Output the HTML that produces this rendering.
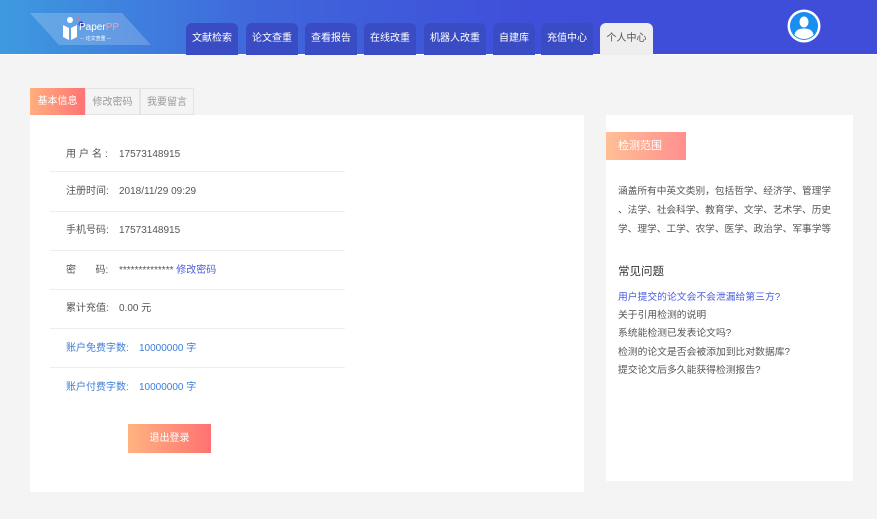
<!DOCTYPE html>
<html><head><meta charset="utf-8">
<style>
*{margin:0;padding:0;box-sizing:border-box}
body{width:877px;height:519px;background:#f4f4f4;font-family:"Liberation Sans","Noto Sans CJK SC",sans-serif;position:relative;overflow:hidden;color:#555}
.hdr{position:absolute;left:0;top:0;width:877px;height:55px;background:linear-gradient(90deg,#3e9ae0 0%,#3f66db 30%,#3f4fd9 60%,#3f4dd8 100%);border-bottom:1px solid #fff}
.logo{position:absolute;left:30px;top:13px}
.nav{position:absolute;top:23px;height:32px;border-radius:6px 6px 0 0;background:#3a4cc4;color:#fff;font-size:10px;line-height:32px;text-align:center}
.nav.on{background:#eeeeee;color:#555}
.av{position:absolute;left:787px;top:9px}
.tab{position:absolute;top:88px;height:27px;line-height:27px;font-size:10px;text-align:center;border:1px solid #e4e4e4;background:#f4f4f4;color:#999}
.tab.on{background:linear-gradient(90deg,#ffae7e,#ff7474);color:#fff;border:none}
.lp{position:absolute;left:30px;top:115px;width:554px;height:377px;background:#fff}
.row{position:absolute;left:20px;width:295px;height:39px;border-bottom:1px solid #eee;font-size:10px;color:#555}
.row span{position:absolute;top:0}
.blue{color:#3d7dd8}
.btn{position:absolute;left:98px;top:309px;width:83px;height:29px;background:linear-gradient(90deg,#ffb380,#ff7272);color:#fff;font-size:10px;line-height:29px;text-align:center}
.rp{position:absolute;left:606px;top:115px;width:247px;height:366px;background:#fff}
.rh{position:absolute;left:0;top:17px;width:80px;height:28px;background:linear-gradient(90deg,#ffbf94,#ff8f8f);color:#fff;font-size:11px;line-height:28px;padding-left:12px}
.rt{position:absolute;left:12px;top:67px;width:215px;font-size:9.7px;line-height:19px;color:#555;line-break:anywhere;word-break:break-all}
.q{position:absolute;left:12px;font-size:9.8px;color:#555}
</style></head><body>
<div class="hdr">
 <svg class="logo" width="121" height="32" viewBox="0 0 121 32">
  <polygon points="0,0 92,0 121,32 29,32" fill="rgba(255,255,255,0.2)"/>
  <circle cx="40" cy="7" r="3" fill="#fff"/>
  <path d="M33,12 L39,15 L39,27 L33,24 Z M41,15 L47,12 L47,24 L41,27 Z" fill="#fff"/>
  <circle cx="51" cy="11" r="2.5" fill="#2d3cc9"/>
  <circle cx="49" cy="6" r="1.2" fill="#ff6b6b"/>
  <text x="49" y="17" font-size="10" fill="#fff" font-family="Liberation Sans">Paper<tspan fill="#ffa0a0">PP</tspan></text>
  <text x="50" y="27" font-size="5" fill="#fff" font-family="Noto Sans CJK SC">— 论文查重 —</text>
 </svg>
 <div class="nav" style="left:186px;width:52px">文献检索</div>
 <div class="nav" style="left:246px;width:52px">论文查重</div>
 <div class="nav" style="left:305px;width:52px">查看报告</div>
 <div class="nav" style="left:364px;width:52px">在线改重</div>
 <div class="nav" style="left:424px;width:62px">机器人改重</div>
 <div class="nav" style="left:493px;width:42px">自建库</div>
 <div class="nav" style="left:541px;width:52px">充值中心</div>
 <div class="nav on" style="left:600px;width:53px">个人中心</div>
 <svg class="av" width="34" height="34" viewBox="0 0 34 34">
  <circle cx="17" cy="17" r="16.5" fill="#fff"/>
  <circle cx="17" cy="17" r="14" fill="#1a8df0"/>
  <ellipse cx="17" cy="13" rx="4.5" ry="5.5" fill="#fff"/>
  <path d="M7.5,26 Q8.5,19.5 17,19.5 Q25.5,19.5 26.5,26 Q22,30 17,30 Q12,30 7.5,26Z" fill="#fff"/>
 </svg>
</div>
<div class="tab on" style="left:30px;width:55px">基本信息</div>
<div class="tab" style="left:85px;width:55px">修改密码</div>
<div class="tab" style="left:140px;width:54px">我要留言</div>
<div class="lp">
 <div class="row" style="top:18px;line-height:43px"><span style="left:16px;letter-spacing:3px">用户名:</span><span style="left:69px">17573148915</span></div>
 <div class="row" style="top:58px;line-height:37px"><span style="left:16px">注册时间:</span><span style="left:69px">2018/11/29 09:29</span></div>
 <div class="row" style="top:97px;line-height:37px"><span style="left:16px">手机号码:</span><span style="left:69px">17573148915</span></div>
 <div class="row" style="top:136px;line-height:39px"><span style="left:16px">密&nbsp;&nbsp;&nbsp;&nbsp;&nbsp;&nbsp;&nbsp;码:</span><span style="left:69px">************** <span class="blue" style="position:static;color:#4a5de0">修改密码</span></span></div>
 <div class="row" style="top:175px;line-height:38px"><span style="left:16px">累计充值:</span><span style="left:69px">0.00 元</span></div>
 <div class="row blue" style="top:214px;line-height:40px"><span style="left:16px">账户免费字数:</span><span style="left:89px">10000000 字</span></div>
 <div class="row blue" style="top:253px;line-height:40px;border:none"><span style="left:16px">账户付费字数:</span><span style="left:89px">10000000 字</span></div>
 <div class="btn">退出登录</div>
</div>
<div class="rp">
 <div class="rh">检测范围</div>
 <div class="rt">涵盖所有中英文类别，包括哲学、经济学、管理学、法学、社会科学、教育学、文学、艺术学、历史学、理学、工学、农学、医学、政治学、军事学等</div>
 <div class="q" style="top:148px;font-size:11.5px;color:#333">常见问题</div>
 <div class="q" style="top:174px;color:#4a5de0">用户提交的论文会不会泄漏给第三方?</div>
 <div class="q" style="top:192px">关于引用检测的说明</div>
 <div class="q" style="top:210px">系统能检测已发表论文吗?</div>
 <div class="q" style="top:229px">检测的论文是否会被添加到比对数据库?</div>
 <div class="q" style="top:247px">提交论文后多久能获得检测报告?</div>
</div>
</body></html>
